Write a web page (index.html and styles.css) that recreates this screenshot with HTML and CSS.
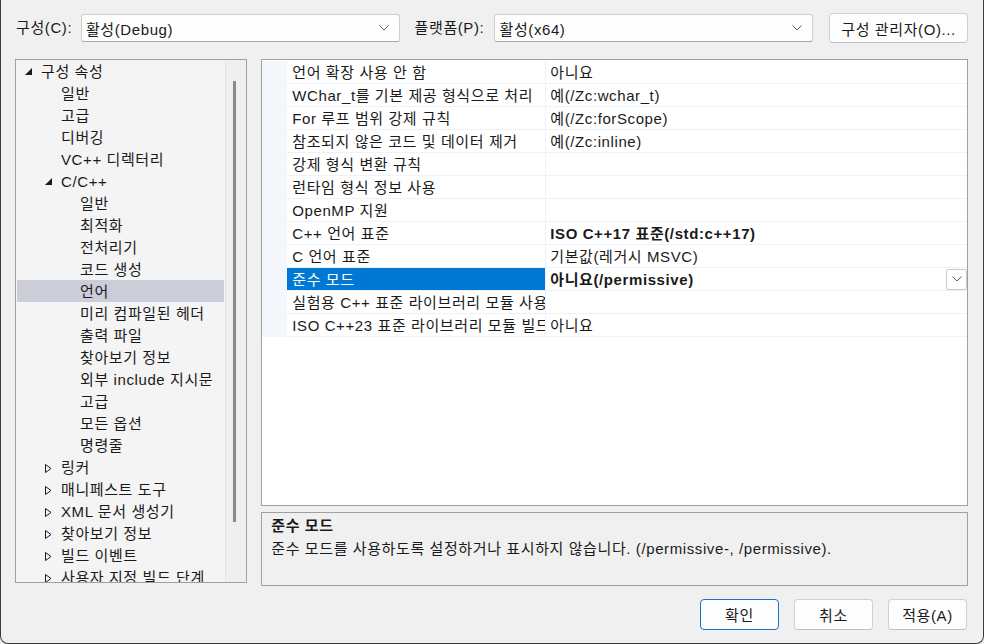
FILE: index.html
```html
<!DOCTYPE html>
<html lang="ko">
<head>
    <meta charset="UTF-8">
    <title>속성 페이지</title>
    <link rel="stylesheet" href="styles.css">
</head>
<body>
<div class="dialog">

    <div class="toolbar">
        <label class="lbl lbl-config">구성(C):</label>
        <div class="combo">
            <span>활성(Debug)</span>
            <svg class="chev" width="10" height="6" viewBox="0 0 10 6"><polyline points="0.5,0.5 5,5 9.5,0.5" fill="none" stroke="#606060" stroke-width="1"/></svg>
        </div>
        <label class="lbl lbl-platform">플랫폼(P):</label>
        <div class="combo">
            <span>활성(x64)</span>
            <svg class="chev" width="10" height="6" viewBox="0 0 10 6"><polyline points="0.5,0.5 5,5 9.5,0.5" fill="none" stroke="#606060" stroke-width="1"/></svg>
        </div>
        <button class="btn btn-manager">구성 관리자(O)...</button>
    </div>

    <div class="main">
        <div class="tree">
            <div class="tree-list">
                <div class="node l0"><span class="tog"><svg width="8" height="8" viewBox="0 0 8 8"><polygon points="7,0 7,7 0,7" fill="#1a1a1a"/></svg></span>구성 속성</div>
                <div class="node l1"><span class="tog"></span>일반</div>
                <div class="node l1"><span class="tog"></span>고급</div>
                <div class="node l1"><span class="tog"></span>디버깅</div>
                <div class="node l1"><span class="tog"></span>VC++ 디렉터리</div>
                <div class="node l1"><span class="tog"><svg width="8" height="8" viewBox="0 0 8 8"><polygon points="7,0 7,7 0,7" fill="#1a1a1a"/></svg></span>C/C++</div>
                <div class="node l2"><span class="tog"></span>일반</div>
                <div class="node l2"><span class="tog"></span>최적화</div>
                <div class="node l2"><span class="tog"></span>전처리기</div>
                <div class="node l2"><span class="tog"></span>코드 생성</div>
                <div class="node l2 selected"><span class="tog"></span>언어</div>
                <div class="node l2"><span class="tog"></span>미리 컴파일된 헤더</div>
                <div class="node l2"><span class="tog"></span>출력 파일</div>
                <div class="node l2"><span class="tog"></span>찾아보기 정보</div>
                <div class="node l2"><span class="tog"></span>외부 include 지시문</div>
                <div class="node l2"><span class="tog"></span>고급</div>
                <div class="node l2"><span class="tog"></span>모든 옵션</div>
                <div class="node l2"><span class="tog"></span>명령줄</div>
                <div class="node l1"><span class="tog"><svg width="7" height="9" viewBox="0 0 7 9"><polygon points="0.5,0.5 6,4.5 0.5,8.5" fill="none" stroke="#1a1a1a" stroke-width="1"/></svg></span>링커</div>
                <div class="node l1"><span class="tog"><svg width="7" height="9" viewBox="0 0 7 9"><polygon points="0.5,0.5 6,4.5 0.5,8.5" fill="none" stroke="#1a1a1a" stroke-width="1"/></svg></span>매니페스트 도구</div>
                <div class="node l1"><span class="tog"><svg width="7" height="9" viewBox="0 0 7 9"><polygon points="0.5,0.5 6,4.5 0.5,8.5" fill="none" stroke="#1a1a1a" stroke-width="1"/></svg></span>XML 문서 생성기</div>
                <div class="node l1"><span class="tog"><svg width="7" height="9" viewBox="0 0 7 9"><polygon points="0.5,0.5 6,4.5 0.5,8.5" fill="none" stroke="#1a1a1a" stroke-width="1"/></svg></span>찾아보기 정보</div>
                <div class="node l1"><span class="tog"><svg width="7" height="9" viewBox="0 0 7 9"><polygon points="0.5,0.5 6,4.5 0.5,8.5" fill="none" stroke="#1a1a1a" stroke-width="1"/></svg></span>빌드 이벤트</div>
                <div class="node l1 last"><span class="tog"><svg width="7" height="9" viewBox="0 0 7 9"><polygon points="0.5,0.5 6,4.5 0.5,8.5" fill="none" stroke="#1a1a1a" stroke-width="1"/></svg></span>사용자 지정 빌드 단계</div>
            </div>
            <div class="scrollbar">
                <div class="thumb"></div>
            </div>
        </div>

        <div class="right">
            <div class="grid">
                <div class="prop"><span class="gut"></span><span class="name">언어 확장 사용 안 함</span><span class="val">아니요</span></div>
                <div class="prop"><span class="gut"></span><span class="name">WChar_t를 기본 제공 형식으로 처리</span><span class="val">예(/Zc:wchar_t)</span></div>
                <div class="prop"><span class="gut"></span><span class="name">For 루프 범위 강제 규칙</span><span class="val">예(/Zc:forScope)</span></div>
                <div class="prop"><span class="gut"></span><span class="name">참조되지 않은 코드 및 데이터 제거</span><span class="val">예(/Zc:inline)</span></div>
                <div class="prop"><span class="gut"></span><span class="name">강제 형식 변환 규칙</span><span class="val"></span></div>
                <div class="prop"><span class="gut"></span><span class="name">런타임 형식 정보 사용</span><span class="val"></span></div>
                <div class="prop"><span class="gut"></span><span class="name">OpenMP 지원</span><span class="val"></span></div>
                <div class="prop"><span class="gut"></span><span class="name">C++ 언어 표준</span><span class="val bold">ISO C++17 표준(/std:c++17)</span></div>
                <div class="prop"><span class="gut"></span><span class="name">C 언어 표준</span><span class="val">기본값(레거시 MSVC)</span></div>
                <div class="prop active"><span class="gut"></span><span class="name">준수 모드</span><span class="val bold">아니요(/permissive)<span class="drop"><svg width="10" height="6" viewBox="0 0 10 6"><polyline points="0.5,0.5 5,5 9.5,0.5" fill="none" stroke="#606060" stroke-width="1"/></svg></span></span></div>
                <div class="prop"><span class="gut"></span><span class="name">실험용 C++ 표준 라이브러리 모듈 사용</span><span class="val"></span></div>
                <div class="prop"><span class="gut"></span><span class="name">ISO C++23 표준 라이브러리 모듈 빌드</span><span class="val">아니요</span></div>
            </div>
            <div class="desc">
                <div class="desc-title">준수 모드</div>
                <div class="desc-text">준수 모드를 사용하도록 설정하거나 표시하지 않습니다. (/permissive-, /permissive).</div>
            </div>
        </div>
    </div>

    <div class="footer">
        <button class="btn btn-ok">확인</button>
        <button class="btn">취소</button>
        <button class="btn">적용(A)</button>
    </div>

</div>
</body>
</html>
```

FILE: styles.css
```css
html, body {
    margin: 0;
    padding: 0;
}
body {
    width: 984px;
    height: 644px;
    overflow: hidden;
    background: #f0f0f0;
    font-family: "Liberation Sans", "Noto Sans CJK KR", sans-serif;
    font-size: 15px;
    letter-spacing: 0.6px;
    color: #1a1a1a;
}
.dialog {
    box-sizing: border-box;
    width: 984px;
    height: 644px;
    border: 1px solid #3a3a3a;
    border-top: none;
    border-radius: 0 0 8px 8px;
    padding: 13px 15px 0 14px;
    background: #f0f0f0;
}

/* top row */
.toolbar {
    display: flex;
    align-items: center;
    height: 30px;
}
.lbl {
    line-height: 20px;
    white-space: nowrap;
}
.lbl-config {
    width: 66px;
    padding-left: 1px;
    box-sizing: border-box;
}
.lbl-platform {
    width: 80px;
    margin-left: 15px;
}
.combo {
    box-sizing: border-box;
    width: 319px;
    height: 28px;
    display: flex;
    align-items: center;
    justify-content: space-between;
    padding: 0 10px 0 4px;
    background: #fdfdfd;
    border: 1px solid #cfcfcf;
    border-bottom-color: #a8a8a8;
    border-radius: 3px;
}
.btn {
    box-sizing: border-box;
    font-family: inherit;
    font-size: 15px;
    letter-spacing: 0.6px;
    color: #1a1a1a;
    background: #fdfdfd;
    border: 1px solid #d0d0d0;
    border-bottom-color: #c0c0c0;
    border-radius: 4px;
    padding: 0;
    height: 31px;
    width: 79px;
}
.btn-manager {
    width: 139px;
    height: 30px;
    margin-left: 16px;
}

/* main area */
.main {
    display: flex;
    gap: 14px;
    margin-top: 16px;
}
.tree {
    box-sizing: border-box;
    width: 233px;
    height: 524px;
    border: 1px solid #a0a0a0;
    background: #f4f4f4;
    display: flex;
    overflow: hidden;
}
.tree-list {
    flex: 1;
    overflow: hidden;
}
.node {
    box-sizing: border-box;
    display: flex;
    align-items: flex-start;
    height: 22px;
    padding-top: 2px;
    line-height: 20px;
    white-space: nowrap;
    margin-right: 1px;
    margin-left: 1px;
}
.node.selected {
    background: #cbcdd9;
}
.node.last {
    height: 20px;
    overflow: hidden;
}
.tog {
    width: 16px;
    height: 20px;
    flex: none;
    display: flex;
    align-items: center;
}
.l0 { padding-left: 8px; }
.l1 { padding-left: 28px; }
.l2 { padding-left: 47px; }
.scrollbar {
    width: 20px;
    flex: none;
    background: #efefef;
    border-left: 1px solid #e4e4e4;
    position: relative;
}
.thumb {
    position: absolute;
    left: 7px;
    top: 21px;
    width: 3px;
    height: 441px;
    background: #8a8a8a;
}

.right {
    width: 709px;
}
.grid {
    box-sizing: border-box;
    height: 447px;
    border: 1px solid #a0a0a0;
    background: #ffffff;
    padding-top: 1px;
}
.prop {
    display: flex;
    height: 23px;
}
.gut {
    width: 25px;
    flex: none;
    background: #f3f6fb;
}
.name, .val {
    box-sizing: border-box;
    height: 23px;
    padding-top: 1px;
    line-height: 21px;
    border-bottom: 1px solid #edf1f8;
    white-space: nowrap;
    overflow: hidden;
}
.name {
    width: 259px;
    flex: none;
    padding-left: 5px;
    border-right: 1px solid #edf1f8;
}
.val {
    flex: 1;
    padding-left: 4px;
    display: flex;
    align-items: center;
    justify-content: space-between;
}
.bold {
    font-weight: bold;
}
.active .name {
    background: #0078d4;
    color: #ffffff;
}
.drop {
    box-sizing: border-box;
    width: 21px;
    height: 21px;
    margin-top: -1px;
    border: 1px solid #c8c8c8;
    border-radius: 2px;
    background: #fff;
    display: flex;
    align-items: center;
    justify-content: center;
}

.desc {
    box-sizing: border-box;
    height: 74px;
    margin-top: 6px;
    border: 1px solid #a0a0a0;
    background: #f0f0f0;
    padding: 2px 9px;
}
.desc-title {
    font-weight: bold;
    line-height: 22px;
}
.desc-text {
    line-height: 24px;
}

.footer {
    display: flex;
    justify-content: flex-end;
    gap: 15px;
    margin-top: 13px;
    padding-right: 1px;
}
.btn-ok {
    border-color: #1a73c8;
}
```
